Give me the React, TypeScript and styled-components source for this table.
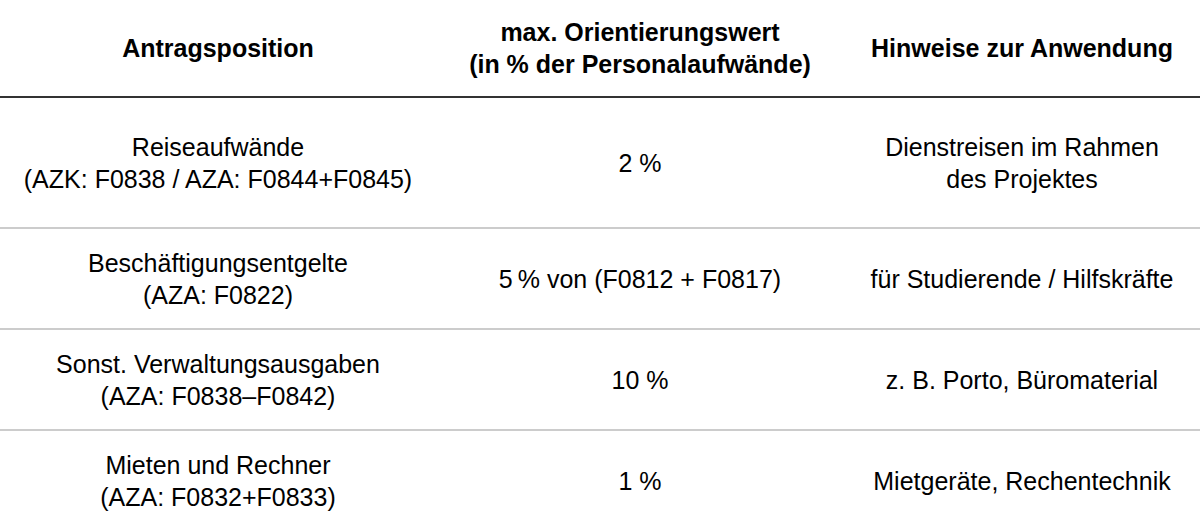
import React from "react";
import styled, { createGlobalStyle } from "styled-components";

const Global = createGlobalStyle`
  html, body { margin: 0; padding: 0; background: #ffffff; }
  body { font-family: "Liberation Sans", Arial, sans-serif; color: #000; }
`;

const Table = styled.div`
  width: 1200px;
  display: grid;
  grid-template-columns: 436px 408px 356px;
`;

const HeadCell = styled.div`
  height: 96px;
  border-bottom: 2px solid #333333;
  display: flex;
  align-items: center;
  justify-content: center;
  text-align: center;
  font-weight: bold;
  font-size: 25px;
  line-height: 32px;
`;

const Cell = styled.div<{ $h: number; $last?: boolean }>`
  height: ${(p) => p.$h}px;
  border-bottom: ${(p) => (p.$last ? "none" : "2px solid #cccccc")};
  display: flex;
  align-items: center;
  justify-content: center;
  text-align: center;
  font-size: 25px;
  line-height: 32px;
`;

type Row = { a: React.ReactNode; b: React.ReactNode; c: React.ReactNode; h: number };

const rows: Row[] = [
  {
    a: (<>Reiseaufwände<br />(AZK: F0838 / AZA: F0844+F0845)</>),
    b: "2 %",
    c: (<>Dienstreisen im Rahmen<br />des Projektes</>),
    h: 129,
  },
  {
    a: (<>Beschäftigungsentgelte<br />(AZA: F0822)</>),
    b: "5\u2009% von (F0812 + F0817)",
    c: "für Studierende / Hilfskräfte",
    h: 99,
  },
  {
    a: (<>Sonst. Verwaltungsausgaben<br />(AZA: F0838–F0842)</>),
    b: "10 %",
    c: "z. B. Porto, Büromaterial",
    h: 99,
  },
  {
    a: (<>Mieten und Rechner<br />(AZA: F0832+F0833)</>),
    b: "1 %",
    c: "Mietgeräte, Rechentechnik",
    h: 99,
  },
];

export default function App() {
  return (
    <>
      <Global />
      <Table>
        <HeadCell>Antragsposition</HeadCell>
        <HeadCell>
          max. Orientierungswert
          <br />
          (in % der Personalaufwände)
        </HeadCell>
        <HeadCell>Hinweise zur Anwendung</HeadCell>
        {rows.map((r, i) => {
          const last = i === rows.length - 1;
          return (
            <React.Fragment key={i}>
              <Cell $h={r.h} $last={last}>{r.a}</Cell>
              <Cell $h={r.h} $last={last}>{r.b}</Cell>
              <Cell $h={r.h} $last={last}>{r.c}</Cell>
            </React.Fragment>
          );
        })}
      </Table>
    </>
  );
}
